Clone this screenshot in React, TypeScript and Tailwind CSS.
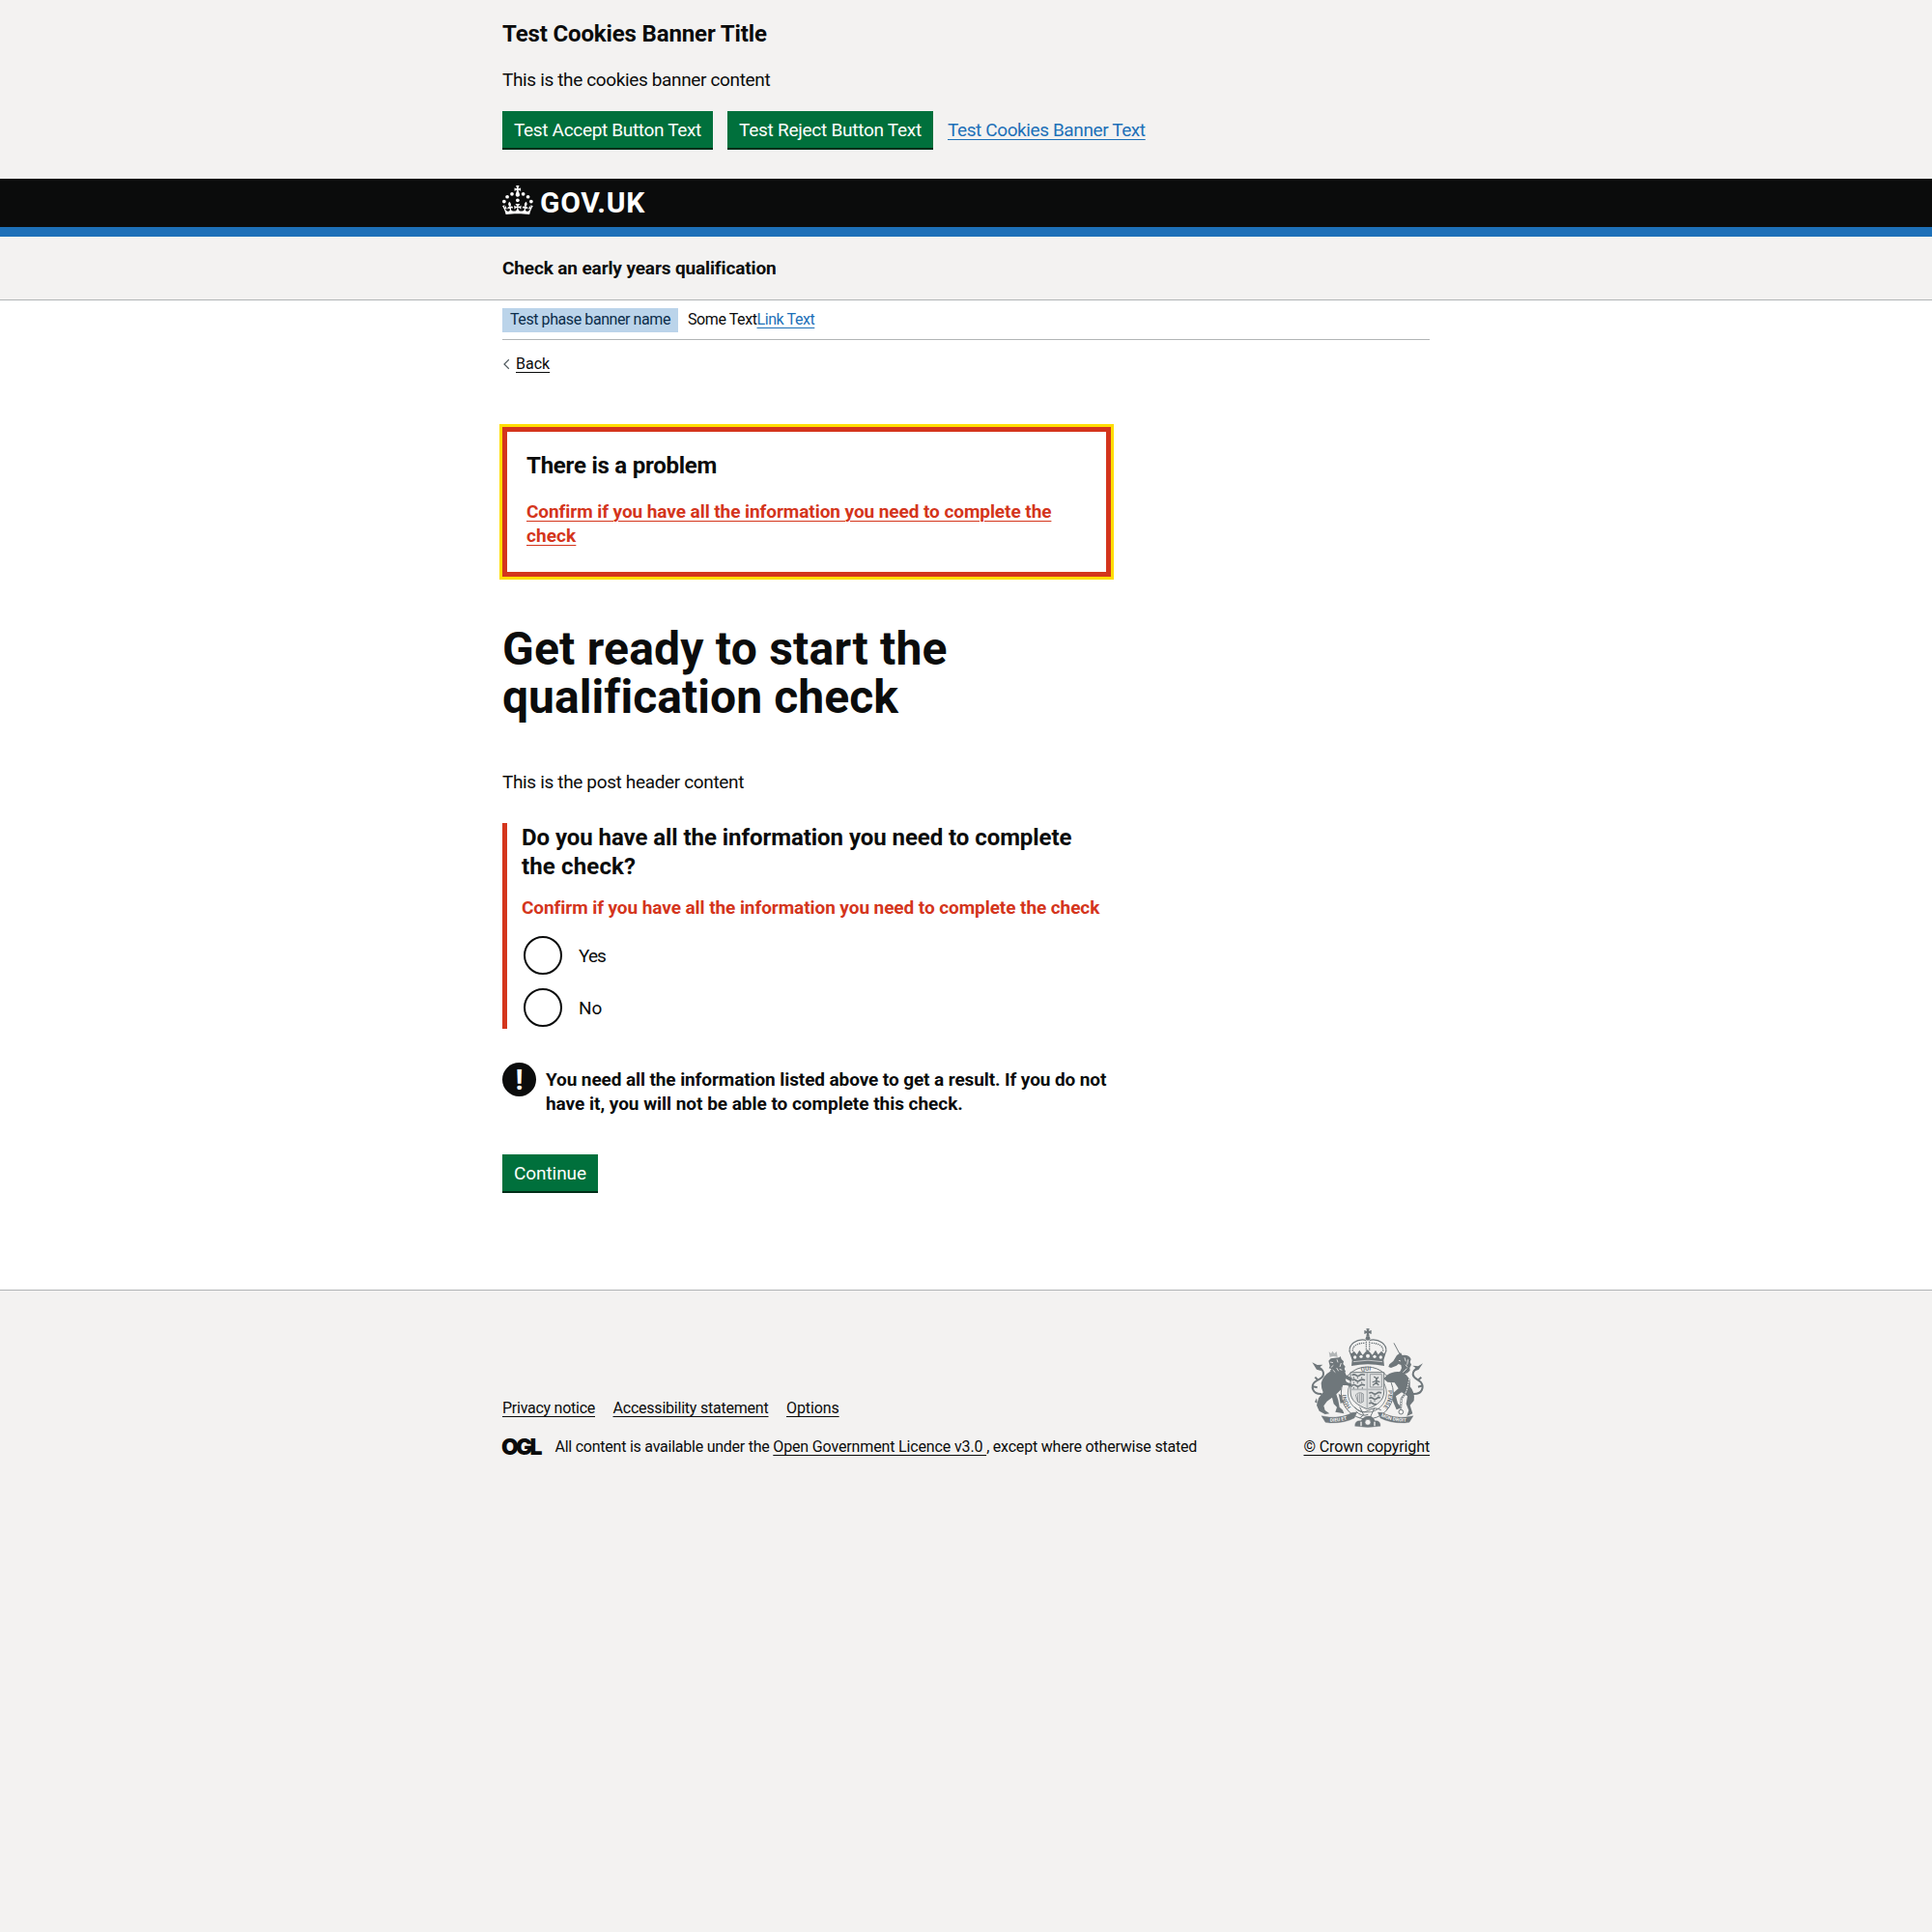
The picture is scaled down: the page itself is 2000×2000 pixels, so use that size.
import type { ReactNode } from "react";

const link = "underline decoration-1 underline-offset-[3px]";

function Container({ children, className = "" }: { children: ReactNode; className?: string }) {
  return <div className={`mx-auto w-[960px] ${className}`}>{children}</div>;
}

function Button({ children, className = "" }: { children: ReactNode; className?: string }) {
  return (
    <button
      className={`flex h-[38px] items-center justify-center whitespace-nowrap bg-[#00703c] text-[19px] leading-[19px] text-white shadow-[0_2px_0_#002d18] ${className}`}
    >
      {children}
    </button>
  );
}

function Crown() {
  return (
    <svg viewBox="0 0 64 60" className="h-[30px] w-[32px]" fill="currentColor" aria-hidden="true">
      <circle cx="20" cy="17.6" r="3.7" />
      <circle cx="10.2" cy="23.5" r="3.7" />
      <circle cx="3.7" cy="33.2" r="3.7" />
      <circle cx="31.7" cy="30.6" r="3.7" />
      <circle cx="43.3" cy="17.6" r="3.7" />
      <circle cx="53.2" cy="23.5" r="3.7" />
      <circle cx="59.7" cy="33.2" r="3.7" />
      <path d="M33.1,9.8c.2-.1.3-.3.5-.5l4.6,2.4v-6.8l-4.6,1.5c-.1-.2-.3-.3-.5-.5l1.9-5.9h-6.7l1.9,5.9c-.2.1-.3.3-.5.5l-4.6-1.5v6.8l4.6-2.4c.1.2.3.3.5.5l-2.6,8c-.9,2.8,1.2,5.7,4.1,5.7h0c3,0,5.1-2.9,4.1-5.7l-2.6-8ZM37,37.9s-3.4,3.8-4.1,6.1c2.2,0,4.2-.5,6.4-2.8l-.7,8.5c-2-2.8-4.4-4.1-5.7-3.8.1,3.1.5,6.7,5.8,7.2,3.7.3,6.7-1.5,7-3.8.4-2.6-2-4.3-3.7-1.6-1.4-4.5,2.4-6.1,4.9-3.2-1.9-4.5-1.8-7.7,2.4-10.9,3,4,2.6,7.3-1.2,11.1,2.4-1.3,6.2,0,4,4.6-1.2-2.8-3.7-2.2-4.2.2-.3,1.7.7,3.7,3,4.2,1.9.3,4.7-.9,7-5.9-1.3,0-2.4.7-3.9,1.7l2.4-8c.6,2.3,1.4,3.7,2.2,4.5.6-1.6.5-2.8,0-5.3l5,1.8c-2.6,3.6-5.2,8.7-7.3,17.5-7.4-1.1-15.7-1.7-24.5-1.7h0c-8.8,0-17.1.6-24.5,1.7-2.1-8.9-4.7-13.9-7.3-17.5l5-1.8c-.5,2.5-.6,3.7,0,5.3.8-.8,1.6-2.3,2.2-4.5l2.4,8c-1.5-1-2.6-1.7-3.9-1.7,2.3,5,5.2,6.2,7,5.9,2.3-.4,3.3-2.4,3-4.2-.5-2.4-3-3.1-4.2-.2-2.2-4.6,1.6-6,4-4.6-3.7-3.7-4.2-7.1-1.2-11.1,4.2,3.2,4.3,6.4,2.4,10.9,2.5-2.8,6.3-1.3,4.9,3.2-1.8-2.7-4.1-1-3.7,1.6.3,2.3,3.3,4.1,7,3.8,5.4-.5,5.7-4.2,5.8-7.2-1.3-.2-3.7,1-5.7,3.8l-.7-8.5c2.2,2.3,4.2,2.7,6.4,2.8-.7-2.3-4.1-6.1-4.1-6.1h10.6,0Z" />
    </svg>
  );
}

function Crest() {
  return (
    <svg viewBox="77 45 356 312" className="h-[104px] w-[118.67px]" fill="none" stroke="#6f777b" aria-hidden="true">
      {/* garter */}
      <circle cx="255" cy="246" r="81" strokeWidth="3" />
      <circle cx="255" cy="246" r="60" strokeWidth="2.5" />
      <path id="garterLeft" d="M205 290A66 66 0 0 1 190 240" stroke="none" />
      <path id="garterTop" d="M237 180A70 70 0 0 1 290 184" stroke="none" />
      <path id="garterRight" d="M320 238A66 66 0 0 1 286 305" stroke="none" />
      <g fill="#6f777b" stroke="none" fontSize="18" fontWeight="700" fontFamily="Roboto, sans-serif">
        <text>
          <textPath href="#garterLeft">HONI</textPath>
        </text>
        <text>
          <textPath href="#garterTop">QUI</textPath>
        </text>
        <text>
          <textPath href="#garterRight">PENSE</textPath>
        </text>
      </g>
      {/* shield */}
      <path d="M203 182h104v61c0 26-22 42-52 53-30-11-52-27-52-53z" fill="#e3e4e4" strokeWidth="3" />
      <path d="M255 183v112M203 235h104" strokeWidth="5" stroke="#b4b8ba" />
      <g strokeWidth="5">
        <path d="M208 191q6-5 12 0t12 0t16-1M208 207q6-5 12 0t12 0t16-1M208 223q6-5 12 0t12 0t16-1" />
        <path d="M213 196v5M225 196v5M238 196v5M213 212v5M225 212v5M238 212v5M213 228v5M226 228v5M240 228v5" strokeWidth="3" />
        <path d="M261 247q6-5 12 0t12 0t14-1M261 263q6-5 12 0t12 0t10-1M261 279q6-5 12 0t10 0" />
        <path d="M266 252v5M278 252v5M290 252v5M266 268v5M278 268v5" strokeWidth="3" />
      </g>
      <path d="M264 188h36v40h-36z" strokeWidth="2" />
      <path d="M275 196q9 0 8 10t8 16M290 197q-6 3-7 11l-12 5M283 214l-11 9M283 208l11 4" strokeWidth="4" />
      <path d="M219 252q12-12 24-3v24q-7 7-17 1zM226 250v23M232 247v28M238 247v28" strokeWidth="2" />
      {/* royal crown */}
      <g fill="#6f777b" stroke="none">
        <path d="M252 46h10l-2 8 8-3v12l-8-3 2 10h-10l2-10-8 3V51l8 3z" />
        <circle cx="257" cy="76" r="7" />
        <path d="M197 112l9 12 8-8 9 11 8-14 10 15 15-17 15 17 10-15 8 14 10-11 8 8 9-12-10 32 2 18q-51-10-102 0l2-18z" />
      </g>
      <g fill="#f3f2f1" stroke="none">
        <circle cx="217" cy="135" r="5" />
        <circle cx="236" cy="133" r="5" />
        <circle cx="257" cy="131" r="6" />
        <circle cx="278" cy="133" r="5" />
        <circle cx="297" cy="135" r="5" />
      </g>
      <path d="M212 149q45-9 90 0" stroke="#f3f2f1" strokeWidth="2" />
      <path d="M201 118C196 96 222 76 252 82M313 118c5-22-21-42-51-36" strokeWidth="3.5" />
      <path d="M210 116c-2-16 16-26 39-25M304 116c2-16-16-26-39-25" strokeWidth="4" strokeDasharray="4 2.5" />
      <path d="M252 86v28M262 86v28" strokeWidth="4" strokeDasharray="4 2.5" />
      {/* lion */}
      <g fill="#6f777b" stroke="none">
        <path d="M135 146l7-7 12-2 14-1 4-4 3 9 7 7-2 8 7 8-3 7 4 8-7 6-6 9-16 2-14-6 2-9-8-3 5-6-8-3 3-7z" />
        <path d="M142 178q-24 14-30 37 0 17 6 29l-14 18-6 22 8 18 18 10 14-2-14-10-4-14 10-14 16-12 5 20 10 10-5 15 27 5-4-11-10-9-4-22-6-18 14-14 4-14 14 0 18 6-2-10-16-6-6-12 20 10 4-10-20-10-6-18z" />
        <path d="M136 118l7 6 4-8 6 8 7-7 3 18q-14-6-24 0z" opacity=".5" />
        <path d="M84 151l16 8 17-1-11 9 8 11-16-5zM166 248l12 8-2 12 12 6-16 4zM98 262l-6 12 8 4z" />
      </g>
      <path
        d="M140 150l9 2M150 160l-8 7M161 142l3 9M174 153l-4 12M160 168l6 10M148 174l8 8M169 172l8 3"
        stroke="#f3f2f1"
        strokeWidth="2.5"
      />
      <path d="M114 249c-30 2-35-24-22-37 11-10 27-9 27-25 1-13-9-17-16-21M86 226l14 3M103 207l-10-10" strokeWidth="6" />
      {/* unicorn */}
      <path d="M338 91l18 34" strokeWidth="3" />
      <g fill="#6f777b" stroke="none">
        <path d="M347 129l12-8 5 8q20-3 27 12l-3 9 4 8-5 10 1 8-8 8-14 4-24 2 16-12 4-10-2-9-8-3-6 5-17 7-8-3 3-8 12-10z" />
        <path d="M316 191q22-16 50-9 26 14 22 44 16 18 12 44l-12 14 8 26-18 8 6-18-8-20 4-24-18-12-18 12 6 22 12 14-16 6-12-28 2-24 16-14-12-18-22-2-12-10z" />
        <path d="M428 154l-15 9-17-2 10 8-6 10 15-6z" />
      </g>
      <path d="M353 145l6 2M371 136l4 12M382 142l-3 16M366 182l12-12M374 158l6 8" stroke="#f3f2f1" strokeWidth="2.5" />
      <path d="M397 249c30 2 35-22 25-36-8-10-24-11-25-25 0-12 9-17 16-21M427 223l-14 4M412 207l11-10" strokeWidth="6" />
      <path d="M385 202c-4 28-8 46-24 62l-2 34" strokeWidth="6" />
      <path d="M385 202c-4 28-8 46-24 62l-2 34" stroke="#f3f2f1" strokeWidth="3" strokeDasharray="5 3" />
      <circle cx="360" cy="305" r="7" strokeWidth="3" />
      {/* garter end and compartment */}
      <path d="M216 290q20 24 42 11t40-2M220 303q18 18 38 10M232 290l12 24-12 10M278 292l-14 30" strokeWidth="3" />
      <path d="M217 349q-1-18 18-17 12-16 24-14 12-2 20 14 18-1 17 17-39 7-79 0z" fill="#6f777b" strokeWidth="1" />
      <circle cx="257" cy="337" r="9" fill="#f3f2f1" strokeWidth="2" />
      <path d="M236 335v14M278 335v14" stroke="#f3f2f1" strokeWidth="4" />
      {/* motto ribbon */}
      <path d="M113 317l24 4q42 3 72-14l14-1-8 18q-30 16-76 15l-14-2z" fill="#6f777b" strokeWidth="1" />
      <path d="M398 317l-24 4q-42 3-72-14l-14-1 8 18q30 16 76 15l14-2z" fill="#6f777b" strokeWidth="1" />
      <path id="mottoLeft" d="M139 335q40 1 76-15" stroke="none" />
      <path id="mottoRight" d="M298 319q34 17 84 16" stroke="none" />
      <g fill="#f3f2f1" stroke="none" fontSize="15" fontWeight="700" fontFamily="Roboto, sans-serif">
        <text>
          <textPath href="#mottoLeft">DIEU ET</textPath>
        </text>
        <text>
          <textPath href="#mottoRight">MON DROIT</textPath>
        </text>
      </g>
    </svg>
  );
}

function Radio({ label, className }: { label: string; className: string }) {
  return (
    <label className="flex h-11 items-center pl-0.5">
      <span className="h-10 w-10 rounded-full border-2 border-[#0b0c0c] bg-white" />
      <span className={`ml-[17px] pt-px text-[19px] leading-[25px] ${className}`}>{label}</span>
    </label>
  );
}

export default function App() {
  return (
    <div className="flex min-h-[2000px] flex-col bg-white font-['Roboto',sans-serif] text-[#0b0c0c]">
      <section className="h-[185px] bg-[#f3f2f1] pt-5">
        <Container>
          <h2 className="text-2xl font-bold leading-[30px] tracking-[-0.14px]">Test Cookies Banner Title</h2>
          <p className="mt-5 text-[19px] leading-[25px] tracking-[-0.36px]">This is the cookies banner content</p>
          <div className="mt-5 flex items-center">
            <Button className="w-[218px] tracking-[-0.329px]">Test Accept Button Text</Button>
            <Button className="ml-[15px] w-[213px] tracking-[-0.255px]">Test Reject Button Text</Button>
            <a className={`ml-[15px] text-[19px] leading-[25px] tracking-[-0.4px] text-[#1d70b8] ${link}`}>
              Test Cookies Banner Text
            </a>
          </div>
        </Container>
      </section>

      <header className="h-[60px] border-b-[10px] border-[#1d70b8] bg-[#0b0c0c] text-white">
        <Container className="flex pt-[7px]">
          <Crown />
          <span className="ml-[7px] text-[30px] font-bold leading-[35px] tracking-[0.7px]">GOV.UK</span>
        </Container>
      </header>

      <section className="h-[66px] border-b border-[#b1b4b6] bg-[#f3f2f1]">
        <Container className="pt-5">
          <span className="text-[19px] font-bold leading-[25px] tracking-[-0.13px]">Check an early years qualification</span>
        </Container>
      </section>

      <Container>
        <div className="mt-2 flex h-[33px] border-b border-[#b1b4b6] text-base leading-6">
          <strong className="h-[25px] w-[182px] whitespace-nowrap bg-[#bbd4ea] pl-2 font-normal tracking-[-0.419px] text-[#0c2d4a]">
            Test phase banner name
          </strong>
          <span className="ml-2.5 tracking-[-0.415px]">
            Some Text
            <a className={`text-[#1d70b8] ${link}`}>Link Text</a>
          </span>
        </div>
        <a className="mt-[15px] flex w-fit items-center text-base leading-5">
          <svg viewBox="0 0 14 12" className="h-3 w-3.5" fill="none" stroke="#505a5f" strokeWidth="1.2">
            <path d="M6.8 1.3L2 6l4.8 4.7" />
          </svg>
          <span className={link}>Back</span>
        </a>

        <main className="w-[630px] pt-[55px]">
          <div className="border-[5px] border-[#d4351c] p-5 pb-[25px] outline-[3px] outline-solid outline-[#ffdd00]">
            <h2 className="text-2xl font-bold leading-[30px] tracking-[-0.23px]">There is a problem</h2>
            <p className="mt-5 text-[19px] font-bold leading-[25px] tracking-[-0.07px] text-[#d4351c]">
              <a className={link}>
                Confirm if you have all the information you need to complete the
                <br />
                <span className="tracking-[0.1px]">check</span>
              </a>
            </p>
          </div>

          <h1 className="mt-[50px] text-5xl font-bold leading-[50px]">
            <span className="tracking-[0.22px]">Get ready to start the</span>
            <br />
            <span className="tracking-[0.05px]">qualification check</span>
          </h1>
          <p className="mt-[50px] text-[19px] leading-[25px] tracking-[-0.351px]">This is the post header content</p>

          <fieldset className="mt-[30px] border-l-[5px] border-[#d4351c] pl-[15px]">
            <h2 className="whitespace-nowrap text-2xl font-bold leading-[30px] tracking-[-0.06px]">
              Do you have all the information you need to complete
              <br />
              <span className="tracking-[0.15px]">the check?</span>
            </h2>
            <p className="mt-[15px] whitespace-nowrap text-[19px] font-bold leading-[25px] tracking-[-0.074px] text-[#d4351c]">
              Confirm if you have all the information you need to complete the check
            </p>
            <div className="mt-[15px] flex flex-col gap-2.5">
              <Radio label="Yes" className="tracking-[-0.9px]" />
              <Radio label="No" className="tracking-[-0.1px]" />
            </div>
          </fieldset>

          <div className="mt-[35px] flex gap-2.5">
            <span className="flex h-[35px] w-[35px] shrink-0 items-center justify-center rounded-full bg-[#0b0c0c] text-[30px] font-bold leading-[30px] text-white">
              !
            </span>
            <strong className="mt-[5px] whitespace-nowrap text-[19px] font-bold leading-[25px] tracking-[-0.1px]">
              You need all the information listed above to get a result. If you do not
              <br />
              <span className="tracking-[-0.03px]">have it, you will not be able to complete this check.</span>
            </strong>
          </div>

          <Button className="mt-10 w-[99px] tracking-[-0.072px]">Continue</Button>
        </main>
      </Container>

      <footer className="mt-[102px] grow border-t border-[#b1b4b6] bg-[#f3f2f1] text-base leading-5">
        <Container className="flex items-end justify-between pt-[39px]">
          <div>
            <nav className="flex">
              <a className={`tracking-[-0.258px] ${link}`}>Privacy notice</a>
              <a className={`ml-[18.5px] tracking-[-0.218px] ${link}`}>Accessibility statement</a>
              <a className={`ml-[18.5px] tracking-[-0.1px] ${link}`}>Options</a>
            </nav>
            <div className="mt-5 flex whitespace-nowrap">
              <span className="-ml-px w-[55.5px] font-['Inter',sans-serif] text-[23px] font-black tracking-[-2.8px]">OGL</span>
              <p>
                <span className="tracking-[-0.24px]">All content is available under the </span>
                <a className={`whitespace-pre tracking-[-0.147px] ${link}`}>{"Open Government Licence v3.0 "}</a>
                <span className="tracking-[-0.202px]">, except where otherwise stated</span>
              </p>
            </div>
          </div>
          <div className="flex flex-col items-end">
            <div className="mr-[5.5px]">
              <Crest />
            </div>
            <a className={`mt-[9px] tracking-[-0.117px] ${link}`}>© Crown copyright</a>
          </div>
        </Container>
      </footer>
    </div>
  );
}
